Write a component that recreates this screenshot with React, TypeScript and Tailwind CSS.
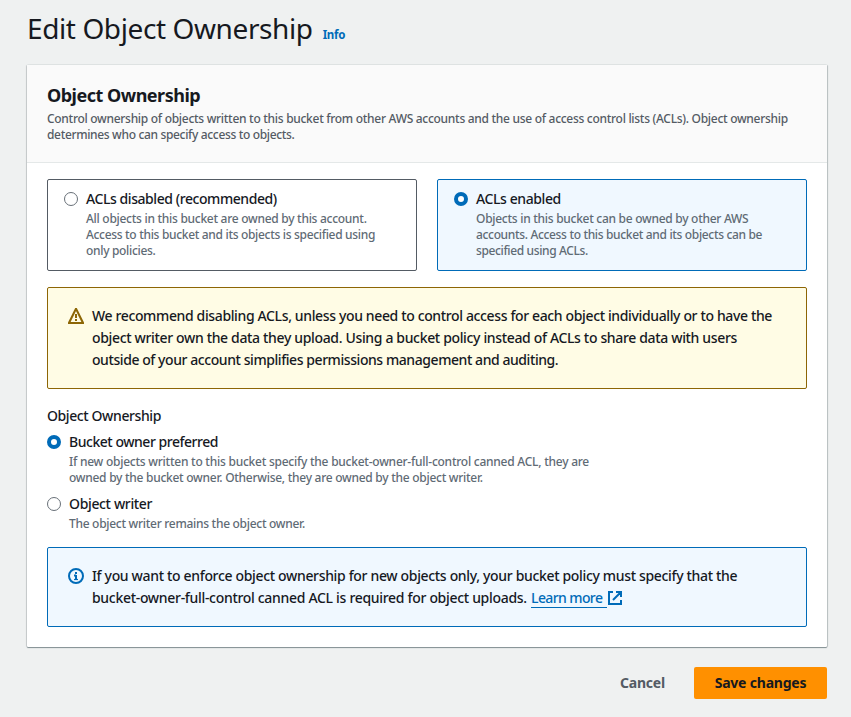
import React from "react";

type TextLine = [text: string, tracking: string];

/* A paragraph whose lines break at fixed places */
function Lines({ lines, className = "" }: { lines: TextLine[]; className?: string }) {
  return (
    <p className={className}>
      {lines.map(([text, tracking]) => (
        <span key={text} className={"block whitespace-nowrap " + tracking}>
          {text}
        </span>
      ))}
    </p>
  );
}

function Radio({ checked = false }: { checked?: boolean }) {
  return checked ? (
    <span className="mt-1 size-3.5 shrink-0 rounded-full border-[4.5px] border-[#006bb8] bg-white" />
  ) : (
    <span className="mt-1 size-3.5 shrink-0 rounded-full border border-[#687078] bg-white" />
  );
}

type OptionProps = { title: TextLine; lines: TextLine[]; checked?: boolean };

function Option({ title, lines, checked }: OptionProps) {
  return (
    <label className="flex gap-2">
      <Radio checked={checked} />
      <span>
        <Lines lines={[title]} className="text-[14px] leading-[22px] font-medium" />
        <Lines lines={lines} className="-mb-px pt-px text-[12px] leading-4 font-medium text-[#5f6b75]" />
      </span>
    </label>
  );
}

function WarningIcon() {
  return (
    <svg viewBox="0 0 16 16" className="mt-[3px] size-4 shrink-0" fill="#8d6605">
      <path fillRule="evenodd" d="M7.2 0h1.6L16 14.5V16H0v-1.5ZM8 3.1 2.6 14h10.8Z" />
      <path d="M7 6h2v4H7ZM7 11h2v2H7Z" />
    </svg>
  );
}

function InfoIcon() {
  return (
    <svg viewBox="0 0 16 16" className="mt-[3px] size-4 shrink-0" fill="none" stroke="#006bb8" strokeWidth="2">
      <circle cx="8" cy="8" r="7" />
      <path d="M7 5h2" />
      <path d="M6 7.5h2M8 7v4" />
      <path d="M6 11.5h4" strokeWidth="1.2" />
    </svg>
  );
}

function ExternalIcon() {
  return (
    <svg viewBox="0 0 16 16" className="size-4" fill="none" stroke="#006bb8" strokeWidth="2">
      <path d="M9 2h5v5M6 10l8-8M14 10v4H2V2h4" />
    </svg>
  );
}

export default function App() {
  return (
    <div className="h-[717px] bg-[#eff1f1] pr-6 pl-[27px] font-['Noto_Sans','Open_Sans',sans-serif] text-[#16191f]">
      <header className="flex h-[65px] items-baseline gap-2.5 pt-2.5">
        <h1 className="text-[28px] leading-9 tracking-[-0.4px] whitespace-nowrap">Edit Object Ownership</h1>
        <a className="text-[11.5px] leading-4 font-bold tracking-[-0.3px] text-[#006bb8]">Info</a>
      </header>

      <main className="rounded-[1px] bg-white shadow-[0_1px_1px_0_rgba(0,28,36,0.45),1px_0_1px_0_rgba(0,28,36,0.2),-1px_0_1px_0_rgba(0,28,36,0.15),0_-1px_0_0_#e6eaea]">
        <div className="h-[98px] border-b border-[#e4e8e8] bg-[#fafafa] px-5 pt-[19px]">
          <h2 className="text-[18px] leading-[22px] font-bold tracking-[-0.5px]">Object Ownership</h2>
          <Lines
            className="mt-[5px] text-[12px] leading-4 font-medium text-[#545b64]"
            lines={[
              ["Control ownership of objects written to this bucket from other AWS accounts and the use of access control lists (ACLs). Object ownership", "tracking-[-0.29px]"],
              ["determines who can specify access to objects.", "tracking-[-0.34px]"],
            ]}
          />
        </div>

        <div className="px-5 pt-4 pb-5">
          <div className="grid grid-cols-2 gap-5">
            <div className="h-[92px] rounded-[2px] border border-[#545b64] px-4 pt-2">
              <Option
                title={["ACLs disabled (recommended)", "tracking-[-0.43px]"]}
                lines={[
                  ["All objects in this bucket are owned by this account.", "tracking-[-0.28px]"],
                  ["Access to this bucket and its objects is specified using", "tracking-[-0.32px]"],
                  ["only policies.", "tracking-[-0.32px]"],
                ]}
              />
            </div>
            <div className="h-[92px] rounded-[2px] border border-[#006bb8] bg-[#f0f8ff] px-4 pt-2">
              <Option
                checked
                title={["ACLs enabled", "tracking-[-0.41px]"]}
                lines={[
                  ["Objects in this bucket can be owned by other AWS", "tracking-[-0.28px]"],
                  ["accounts. Access to this bucket and its objects can be", "tracking-[-0.34px]"],
                  ["specified using ACLs.", "tracking-[-0.37px]"],
                ]}
              />
            </div>
          </div>

          <div className="mt-4 flex h-[102px] gap-2 rounded-[2px] border border-[#8d6605] bg-[#fffce5] px-5 pt-[17px]">
            <WarningIcon />
            <Lines
              className="text-[14px] leading-[22px] font-medium"
              lines={[
                ["We recommend disabling ACLs, unless you need to control access for each object individually or to have the", "tracking-[-0.365px]"],
                ["object writer own the data they upload. Using a bucket policy instead of ACLs to share data with users", "tracking-[-0.345px]"],
                ["outside of your account simplifies permissions management and auditing.", "tracking-[-0.43px]"],
              ]}
            />
          </div>

          <Lines className="mt-4 text-[14px] leading-[22px] font-medium" lines={[["Object Ownership", "tracking-[-0.4px]"]]} />
          <div className="mt-1 flex flex-col gap-2">
            <Option
              checked
              title={["Bucket owner preferred", "tracking-[-0.47px]"]}
              lines={[
                ["If new objects written to this bucket specify the bucket-owner-full-control canned ACL, they are", "tracking-[-0.245px]"],
                ["owned by the bucket owner. Otherwise, they are owned by the object writer.", "tracking-[-0.27px]"],
              ]}
            />
            <Option
              title={["Object writer", "tracking-[-0.35px]"]}
              lines={[["The object writer remains the object owner.", "tracking-[-0.29px]"]]}
            />
          </div>

          <div className="mt-4 flex h-20 gap-2 rounded-[2px] border border-[#006bb8] bg-[#f0f8ff] px-5 pt-[17px]">
            <InfoIcon />
            <div className="text-[14px] leading-[22px] font-medium">
              <Lines lines={[["If you want to enforce object ownership for new objects only, your bucket policy must specify that the", "tracking-[-0.335px]"]]} />
              <div className="flex whitespace-nowrap">
                <span className="w-[439px] tracking-[-0.31px]">bucket-owner-full-control canned ACL is required for object uploads.</span>
                <a className="flex text-[#006bb8]">
                  <span className="h-[21px] w-[76px] border-b border-[#006bb8] tracking-[-0.6px]">Learn more</span>
                  <span className="mt-[3px]"><ExternalIcon /></span>
                </a>
              </div>
            </div>
          </div>
        </div>
      </main>

      <footer className="mt-5 flex justify-end">
        <button className="h-8 px-[29px] pb-0.5 text-[14px] font-bold tracking-[-0.2px] text-[#545b64]">Cancel</button>
        <button className="h-8 w-[133px] rounded-[2px] bg-[#ff9000] pb-0.5 text-[14px] font-bold tracking-[-0.2px]">Save changes</button>
      </footer>
    </div>
  );
}
